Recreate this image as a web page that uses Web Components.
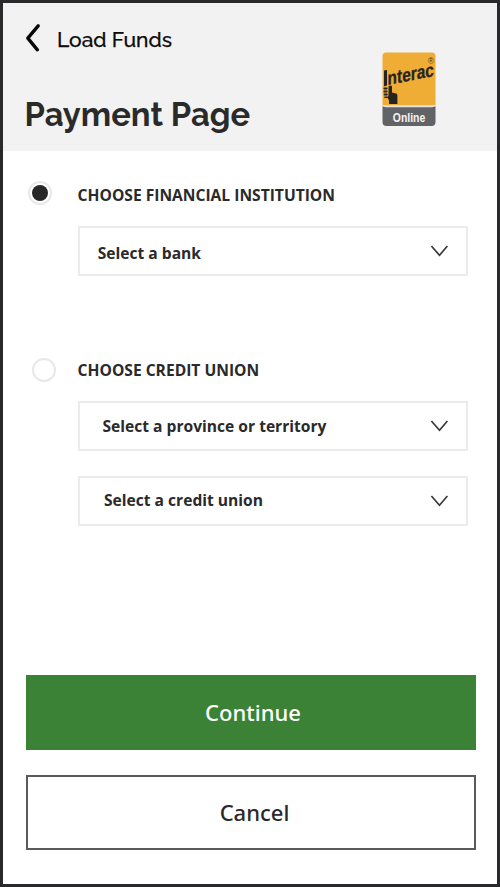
<!DOCTYPE html>
<html lang="en">
<head>
<meta charset="utf-8">
<title>Payment Page</title>
<style>
html,body{margin:0;height:100%}
body{font-family:"Open Sans","Noto Sans",sans-serif;color:#2a2a2b;background:#fff}
</style>
</head>
<body>
<payment-page></payment-page>
<script>
function define(name, html) {
  const template = document.createElement('template');
  template.innerHTML = html;
  customElements.define(name, class extends HTMLElement {
    constructor() {
      super();
      this.attachShadow({mode: 'open'}).append(template.content.cloneNode(true));
    }
  });
}

define('back-link', `
<style>
:host{display:flex;align-items:center;gap:16px;height:30px;font:500 21px/30px "Raleway","Lato",sans-serif;color:#0c0c0c;-webkit-text-stroke:.25px #0c0c0c}
svg{display:block;flex:none;margin-left:1px}
span{margin-top:3px}
</style>
<svg width="17" height="30" viewBox="0 0 17 30"><path d="M14.2 2.8 L3.8 15.2 L13.4 26.8" fill="none" stroke="#090909" stroke-width="3.4" stroke-linecap="round" stroke-linejoin="round"/></svg>
<span><slot></slot></span>`);

define('interac-logo', `
<style>:host{display:block;width:54px;height:75px}svg{display:block;overflow:visible}</style>
<svg width="54" height="75" viewBox="0 0 54 75" role="img" aria-label="Interac Online">
<path d="M4 .5H50Q53.5 .5 53.5 4V53.5H.5V4Q.5 .5 4 .5Z" fill="#efad36"/>
<path d="M.5 54.2L4 55.3H50L53.5 54.2V70Q53.5 74 49.5 74H4.5Q.5 74 .5 70Z" fill="#626366"/>
<path d="M.5 53.3L4 54.4H50L53.5 53.3" fill="none" stroke="#e2e0da" stroke-width="1.2"/>
<path d="M2 18.6L5 18V33.6L2 34.2Z" fill="#27231f"/>
<text transform="translate(5.6 33) skewY(-11)" font-family="Liberation Sans,sans-serif" font-weight="700" font-size="19" textLength="46.2" lengthAdjust="spacingAndGlyphs" fill="#27231f" stroke="#27231f" stroke-width=".3">nterac</text>
<g fill="#27231f"><rect x="1.5" y="35.5" width="4" height="2" rx=".7"/><rect x="1.5" y="38.5" width="4" height="2" rx=".7"/><rect x="1.7" y="41.5" width="4" height="2" rx=".7"/><rect x="2.2" y="44.4" width="3.6" height="1.7" rx=".7"/>
<path d="M6.5 34.5Q8.4 32.6 10 34.2V40.6L14.2 41.6Q15.4 42 15.4 43.6V52H7V48.2L5.4 45.6L6.5 43.6Z"/></g>
<text x="45.8" y="12" font-family="Liberation Sans,sans-serif" font-size="8.5" fill="#4e3f24">®</text>
<text x="10.8" y="69.6" font-family="Liberation Sans,sans-serif" font-weight="700" font-size="12.8" textLength="32.4" lengthAdjust="spacingAndGlyphs" fill="#f4f4f4">Online</text>
</svg>`);

define('page-header', `
<style>
:host{box-sizing:border-box;display:flex;justify-content:space-between;height:148px;padding:20px 61px 0 20px;background:#f2f2f2}
h1{margin:41px 0 0 1.5px;font:700 32.7px/42px "Raleway","Lato",sans-serif;color:#2a2a2b;white-space:nowrap}
.logo{margin-top:29px}
</style>
<div><slot name="back"></slot><h1><slot></slot></h1></div>
<div class="logo"><slot name="logo"></slot></div>`);

define('radio-option', `
<style>
:host{display:grid;grid-template-columns:52px 390px;align-items:start}
i{box-sizing:border-box;display:grid;place-items:center;width:24px;height:24px;border:2px solid #e8e8e7;border-radius:50%;margin:var(--dot-top,0px) 0 0 var(--dot-left,6px);background:#fff}
i::after{content:"";width:16px;height:16px;border-radius:50%;background:var(--dot,transparent)}
.label{font-weight:700;font-size:15.6px;line-height:24px;white-space:nowrap;padding-top:2px;margin-left:-.4px}
.fields{grid-column:2;display:flex;flex-direction:column;gap:25px;margin-top:19px}
</style>
<i></i><div class="label"><slot name="label"></slot></div><div class="fields"><slot></slot></div>`);

define('select-box', `
<style>
:host{box-sizing:border-box;display:flex;align-items:center;justify-content:space-between;width:390px;height:50px;border:2px solid #ebebe9;padding:0 18px 0 var(--inset,17.7px);background:#fff;font-weight:700;font-size:15.6px;line-height:24px}
span{margin-top:var(--text-shift,2px);white-space:nowrap}
svg{display:block}
</style>
<span><slot></slot></span>
<svg width="18" height="12" viewBox="0 0 18 12"><path d="M1.4 1L9.5 10.3L17.4 1" fill="none" stroke="#38383a" stroke-width="1.7"/></svg>`);

define('action-button', `
<style>
:host{box-sizing:border-box;display:flex;align-items:center;justify-content:center;width:450px;height:75px;padding:0 0 2px var(--nudge,4px);font:500 22px/30px "Noto Sans","Open Sans",sans-serif;background:#fff;border:2px solid #5a5a5b;color:#2a2a2b}
:host([primary]){background:#3b8236;border-color:#3b8236;color:#fff}
</style>
<span><slot></slot></span>`);

define('payment-page', `
<style>
:host{box-sizing:border-box;display:flex;flex-direction:column;width:500px;height:887px;border:3px solid #29282a;background:#fff;overflow:hidden}
main{flex:1;display:flex;flex-direction:column;padding:30px 0 0 23px}
.bank{--dot:#272727;--dot-left:2px}
.union{margin-top:80px;--dot-left:6px;--dot-top:2px}
.actions{display:flex;flex-direction:column;gap:25px;margin-top:auto;padding-bottom:34px}
</style>
<page-header><back-link slot="back">Load Funds</back-link>Payment Page<interac-logo slot="logo"></interac-logo></page-header>
<main>
<radio-option class="bank"><span slot="label">CHOOSE FINANCIAL INSTITUTION</span>
<select-box style="--text-shift:3px">Select a bank</select-box></radio-option>
<radio-option class="union"><span slot="label">CHOOSE CREDIT UNION</span>
<select-box style="--inset:22.5px;--text-shift:-1px">Select a province or territory</select-box>
<select-box style="--inset:24px;--text-shift:-3px">Select a credit union</select-box></radio-option>
<div class="actions"><action-button primary>Continue</action-button><action-button style="--nudge:7px">Cancel</action-button></div>
</main>`);
</script>
</body>
</html>
